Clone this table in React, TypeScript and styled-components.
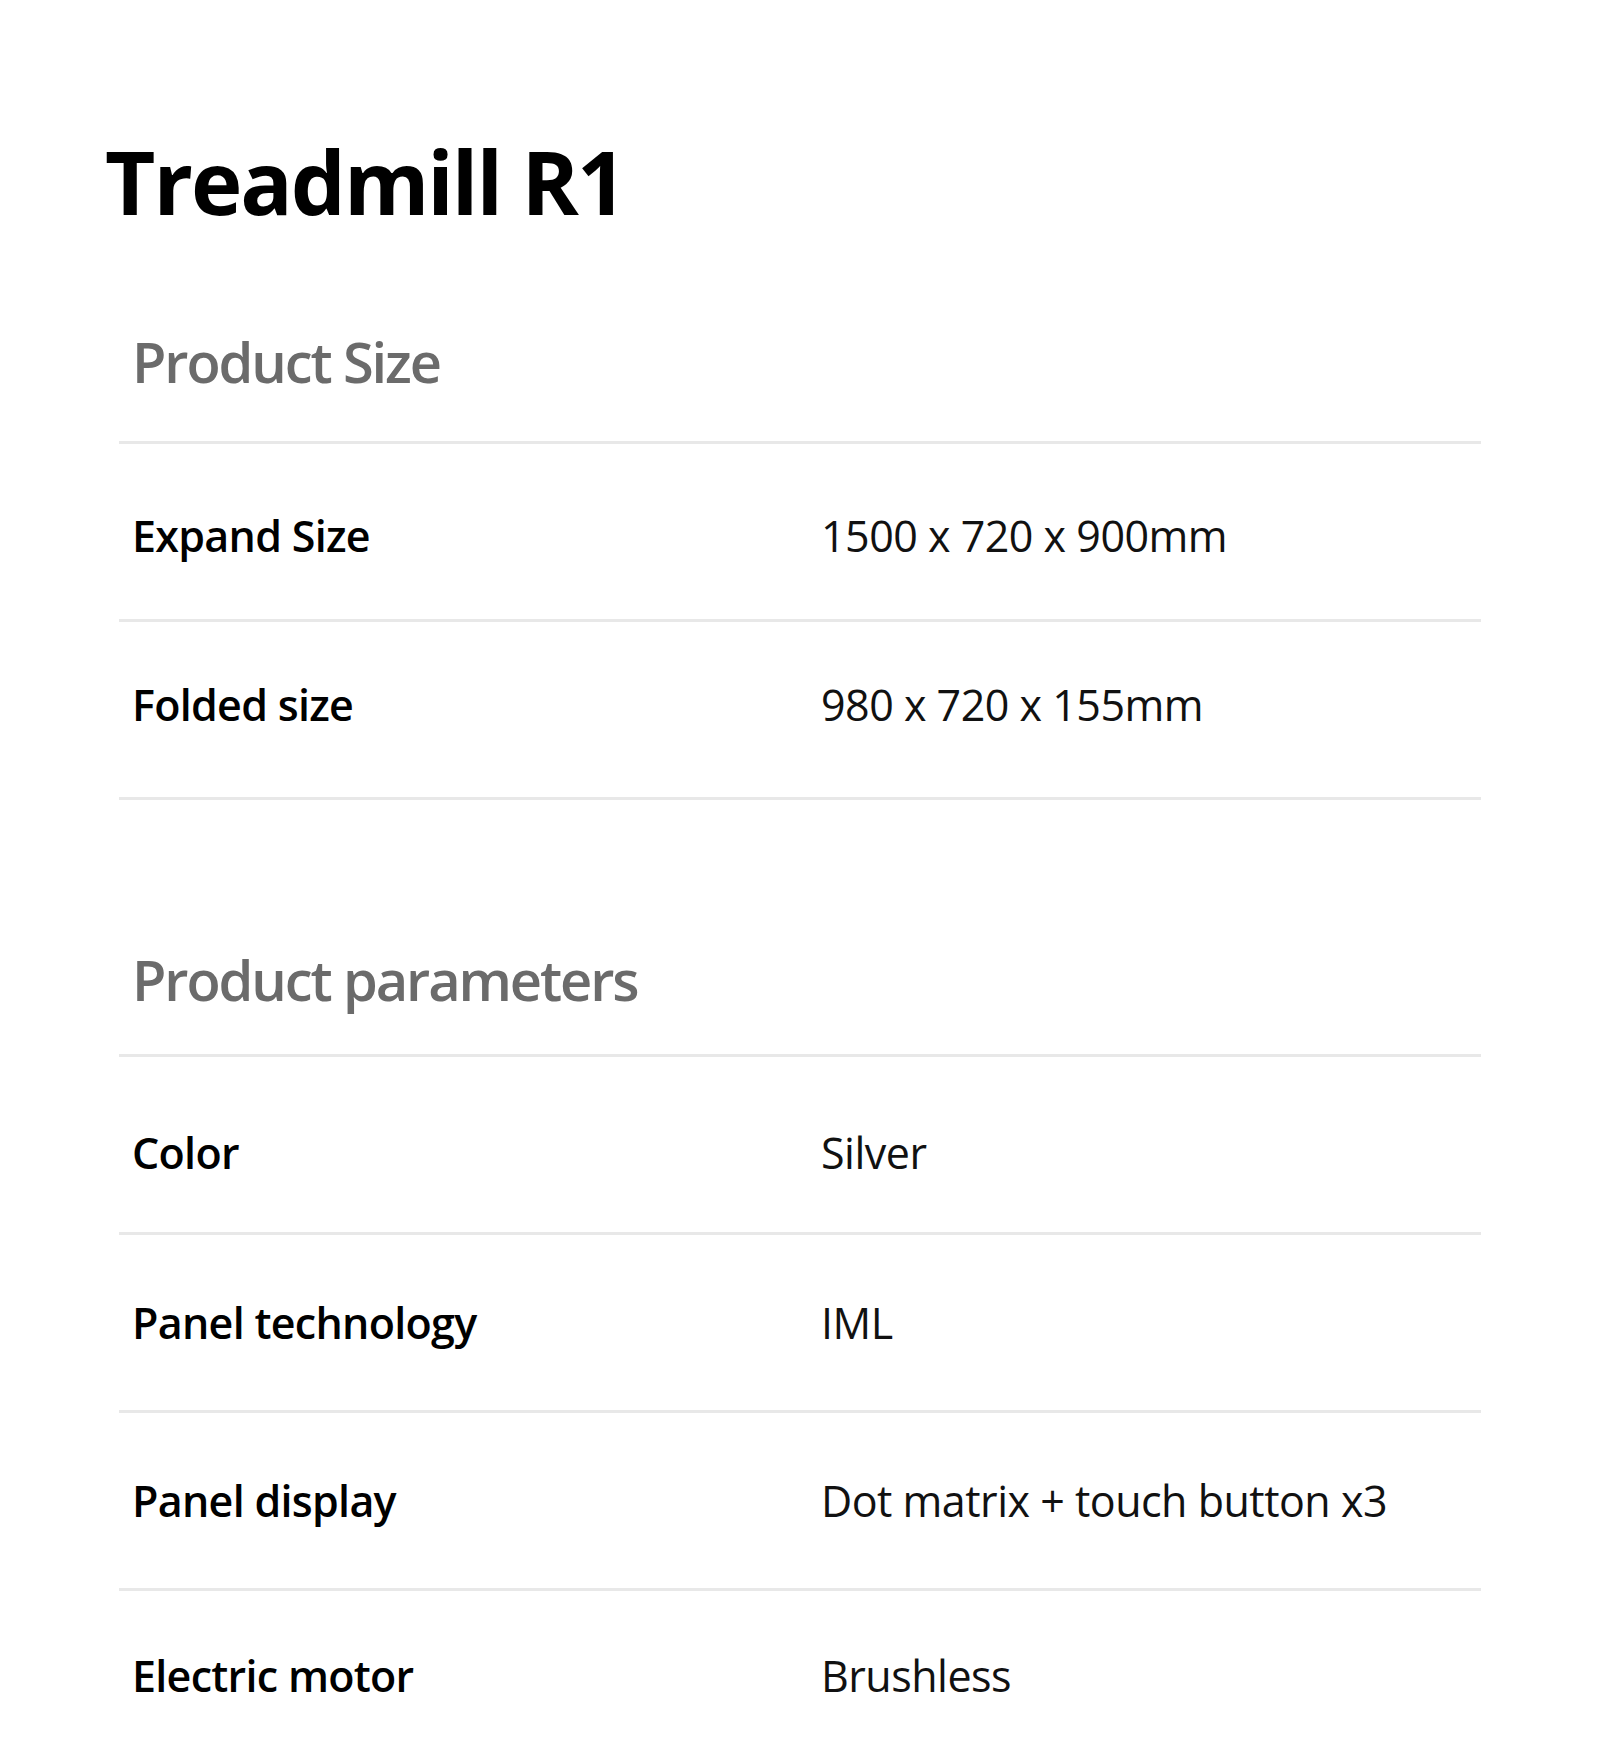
import React from "react";
import styled, { createGlobalStyle } from "styled-components";

const Global = createGlobalStyle`
  html, body {
    margin: 0;
    padding: 0;
    background: #ffffff;
  }
  body {
    font-family: "Open Sans", "Noto Sans", "Liberation Sans", sans-serif;
    -webkit-font-smoothing: antialiased;
  }
`;

const Page = styled.main`
  display: flex;
  flex-direction: column;
  padding: 138px 119px 0 105px;
  box-sizing: border-box;
  width: 1600px;
`;

const Title = styled.h1`
  margin: 0;
  font-size: 87px;
  line-height: 87px;
  font-weight: 700;
  color: #000;
  letter-spacing: -2px;
`;

const Section = styled.section<{ $gap: number }>`
  display: flex;
  flex-direction: column;
  margin-top: ${(p) => p.$gap}px;
  margin-left: 14px;
`;

const SectionHeading = styled.h2<{ $pb: number }>`
  margin: 0;
  padding: 0 0 ${(p) => p.$pb}px 13px;
  font-size: 56px;
  line-height: 56px;
  font-weight: 600;
  color: #6b6b6b;
  letter-spacing: -2.1px;
  border-bottom: 3px solid #e8e8e8;
`;

const Row = styled.div<{ $offset: number }>`
  display: grid;
  grid-template-columns: 687px 1fr;
  align-items: center;
  height: 60px;
  padding: ${(p) => 62 + p.$offset}px 0 ${(p) => 53 - p.$offset}px 13px;
  box-sizing: content-box;
  border-bottom: 3px solid #e8e8e8;
`;

const Label = styled.span`
  font-size: 43px;
  line-height: 60px;
  font-weight: 600;
  color: #000;
  letter-spacing: -0.7px;
`;

const Value = styled.span`
  font-size: 43px;
  line-height: 60px;
  font-weight: 400;
  color: #111;
  letter-spacing: -0.5px;
  margin-left: 2px;
`;

type Spec = { label: string; value: string; offset: number };

const sizeSpecs: Spec[] = [
  { label: "Expand Size", value: "1500 x 720 x 900mm", offset: 0 },
  { label: "Folded size", value: "980 x 720 x 155mm", offset: -9 },
];

const paramSpecs: Spec[] = [
  { label: "Color", value: "Silver", offset: 4 },
  { label: "Panel technology", value: "IML", offset: -4 },
  { label: "Panel display", value: "Dot matrix + touch button x3", offset: -4 },
  { label: "Electric motor", value: "Brushless", offset: -7 },
];

const SpecSection = ({
  title,
  specs,
  gap,
  pb,
}: {
  title: string;
  specs: Spec[];
  gap: number;
  pb: number;
}) => (
  <Section $gap={gap}>
    <SectionHeading $pb={pb}>{title}</SectionHeading>
    {specs.map((s) => (
      <Row key={s.label} $offset={s.offset}>
        <Label>{s.label}</Label>
        <Value>{s.value}</Value>
      </Row>
    ))}
  </Section>
);

export default function App() {
  return (
    <>
      <Global />
      <Page>
        <Title>Treadmill R1</Title>
        <SpecSection title="Product Size" specs={sizeSpecs} gap={108} pb={52} />
        <SpecSection
          title="Product parameters"
          specs={paramSpecs}
          gap={151}
          pb={47}
        />
      </Page>
    </>
  );
}
